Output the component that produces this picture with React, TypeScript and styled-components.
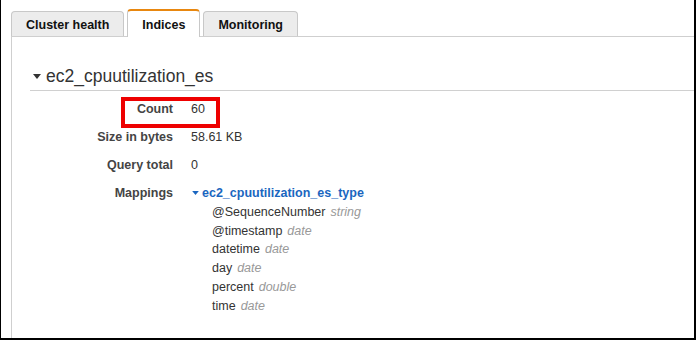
import React from "react";
import styled, { createGlobalStyle } from "styled-components";

const Global = createGlobalStyle`
  html, body { margin: 0; padding: 0; background: #fff; }
  body { font-family: "Liberation Sans", Arial, Helvetica, sans-serif; color: #333; }
  * { box-sizing: border-box; }
`;

const Frame = styled.div`
  width: 696px;
  height: 340px;
  border-left: 1px solid #000;
  border-right: 2px solid #000;
  border-bottom: 2px solid #000;
  padding-left: 10px;
  display: flex;
  flex-direction: column;
  overflow: hidden;
`;

const TabBar = styled.div`
  display: flex;
  align-items: flex-end;
  gap: 3px;
  padding-top: 9px;
  position: relative;
  z-index: 1;
`;

const Tab = styled.div<{ $active?: boolean }>`
  display: flex;
  align-items: center;
  justify-content: center;
  padding: 0 14px;
  height: ${(p) => (p.$active ? "28px" : "25px")};
  margin-bottom: ${(p) => (p.$active ? "-1px" : "0")};
  background: ${(p) => (p.$active ? "#fff" : "#ececec")};
  border: 1px solid #c8c8c8;
  border-top: ${(p) => (p.$active ? "2px solid #e8870f" : "1px solid #c8c8c8")};
  border-bottom: none;
  border-radius: 4px 4px 0 0;
  font-weight: bold;
  font-size: 12.5px;
  color: #111;
  padding-top: 1px;
`;

const Panel = styled.div`
  flex: 1;
  border-top: 1px solid #cfcfcf;
  border-left: 1px solid #cfcfcf;
  padding: 28px 0 0 18px;
`;

const SectionHeader = styled.div`
  display: flex;
  align-items: center;
  gap: 5px;
  height: 26px;
  border-bottom: 1px solid #d0d0d0;
  padding-left: 3px;
  padding-bottom: 2px;
  font-size: 17.5px;
  color: #333;
`;

const Rows = styled.div`
  position: relative;
  display: grid;
  grid-template-columns: 143px 1fr;
  column-gap: 18px;
  margin-top: 4px;
`;

const Label = styled.div`
  text-align: right;
  font-weight: bold;
  font-size: 12.5px;
  line-height: 28px;
  color: #444;
`;

const Value = styled.div`
  font-size: 12.5px;
  line-height: 28px;
  color: #333;
`;

const Highlight = styled.div`
  position: absolute;
  left: 91px;
  top: 2px;
  width: 99px;
  height: 31px;
  border: 4px solid #ee0000;
  pointer-events: none;
`;

const MappingHead = styled.div`
  display: flex;
  align-items: center;
  gap: 3px;
  line-height: 28px;
  font-weight: bold;
  font-size: 12.5px;
  color: #1a66c0;
  padding-left: 1px;
`;

const FieldList = styled.div`
  margin-top: -4px;
  padding-left: 21px;
`;

const Field = styled.div`
  font-size: 12.5px;
  line-height: 18.7px;
  color: #333;
`;

const FieldType = styled.span`
  margin-left: 5px;
  font-style: italic;
  color: #999;
`;

const Caret = ({ color, w }: { color: string; w: number }) => (
  <svg width={w} height={Math.round(w * 0.6)} viewBox="0 0 10 6">
    <polygon points="0,0 10,0 5,6" fill={color} />
  </svg>
);

const fields: [string, string][] = [
  ["@SequenceNumber", "string"],
  ["@timestamp", "date"],
  ["datetime", "date"],
  ["day", "date"],
  ["percent", "double"],
  ["time", "date"],
];

export default function App() {
  return (
    <>
      <Global />
      <Frame>
        <TabBar>
          <Tab>Cluster health</Tab>
          <Tab $active>Indices</Tab>
          <Tab>Monitoring</Tab>
        </TabBar>
        <Panel>
          <SectionHeader>
            <Caret color="#333" w={8} />
            <span>ec2_cpuutilization_es</span>
          </SectionHeader>
          <Rows>
            <Label>Count</Label>
            <Value>60</Value>
            <Label>Size in bytes</Label>
            <Value>58.61 KB</Value>
            <Label>Query total</Label>
            <Value>0</Value>
            <Label>Mappings</Label>
            <Value>
              <MappingHead>
                <Caret color="#1a66c0" w={7} />
                <span>ec2_cpuutilization_es_type</span>
              </MappingHead>
              <FieldList>
                {fields.map(([n, t]) => (
                  <Field key={n}>
                    {n}
                    <FieldType>{t}</FieldType>
                  </Field>
                ))}
              </FieldList>
            </Value>
            <Highlight />
          </Rows>
        </Panel>
      </Frame>
    </>
  );
}
